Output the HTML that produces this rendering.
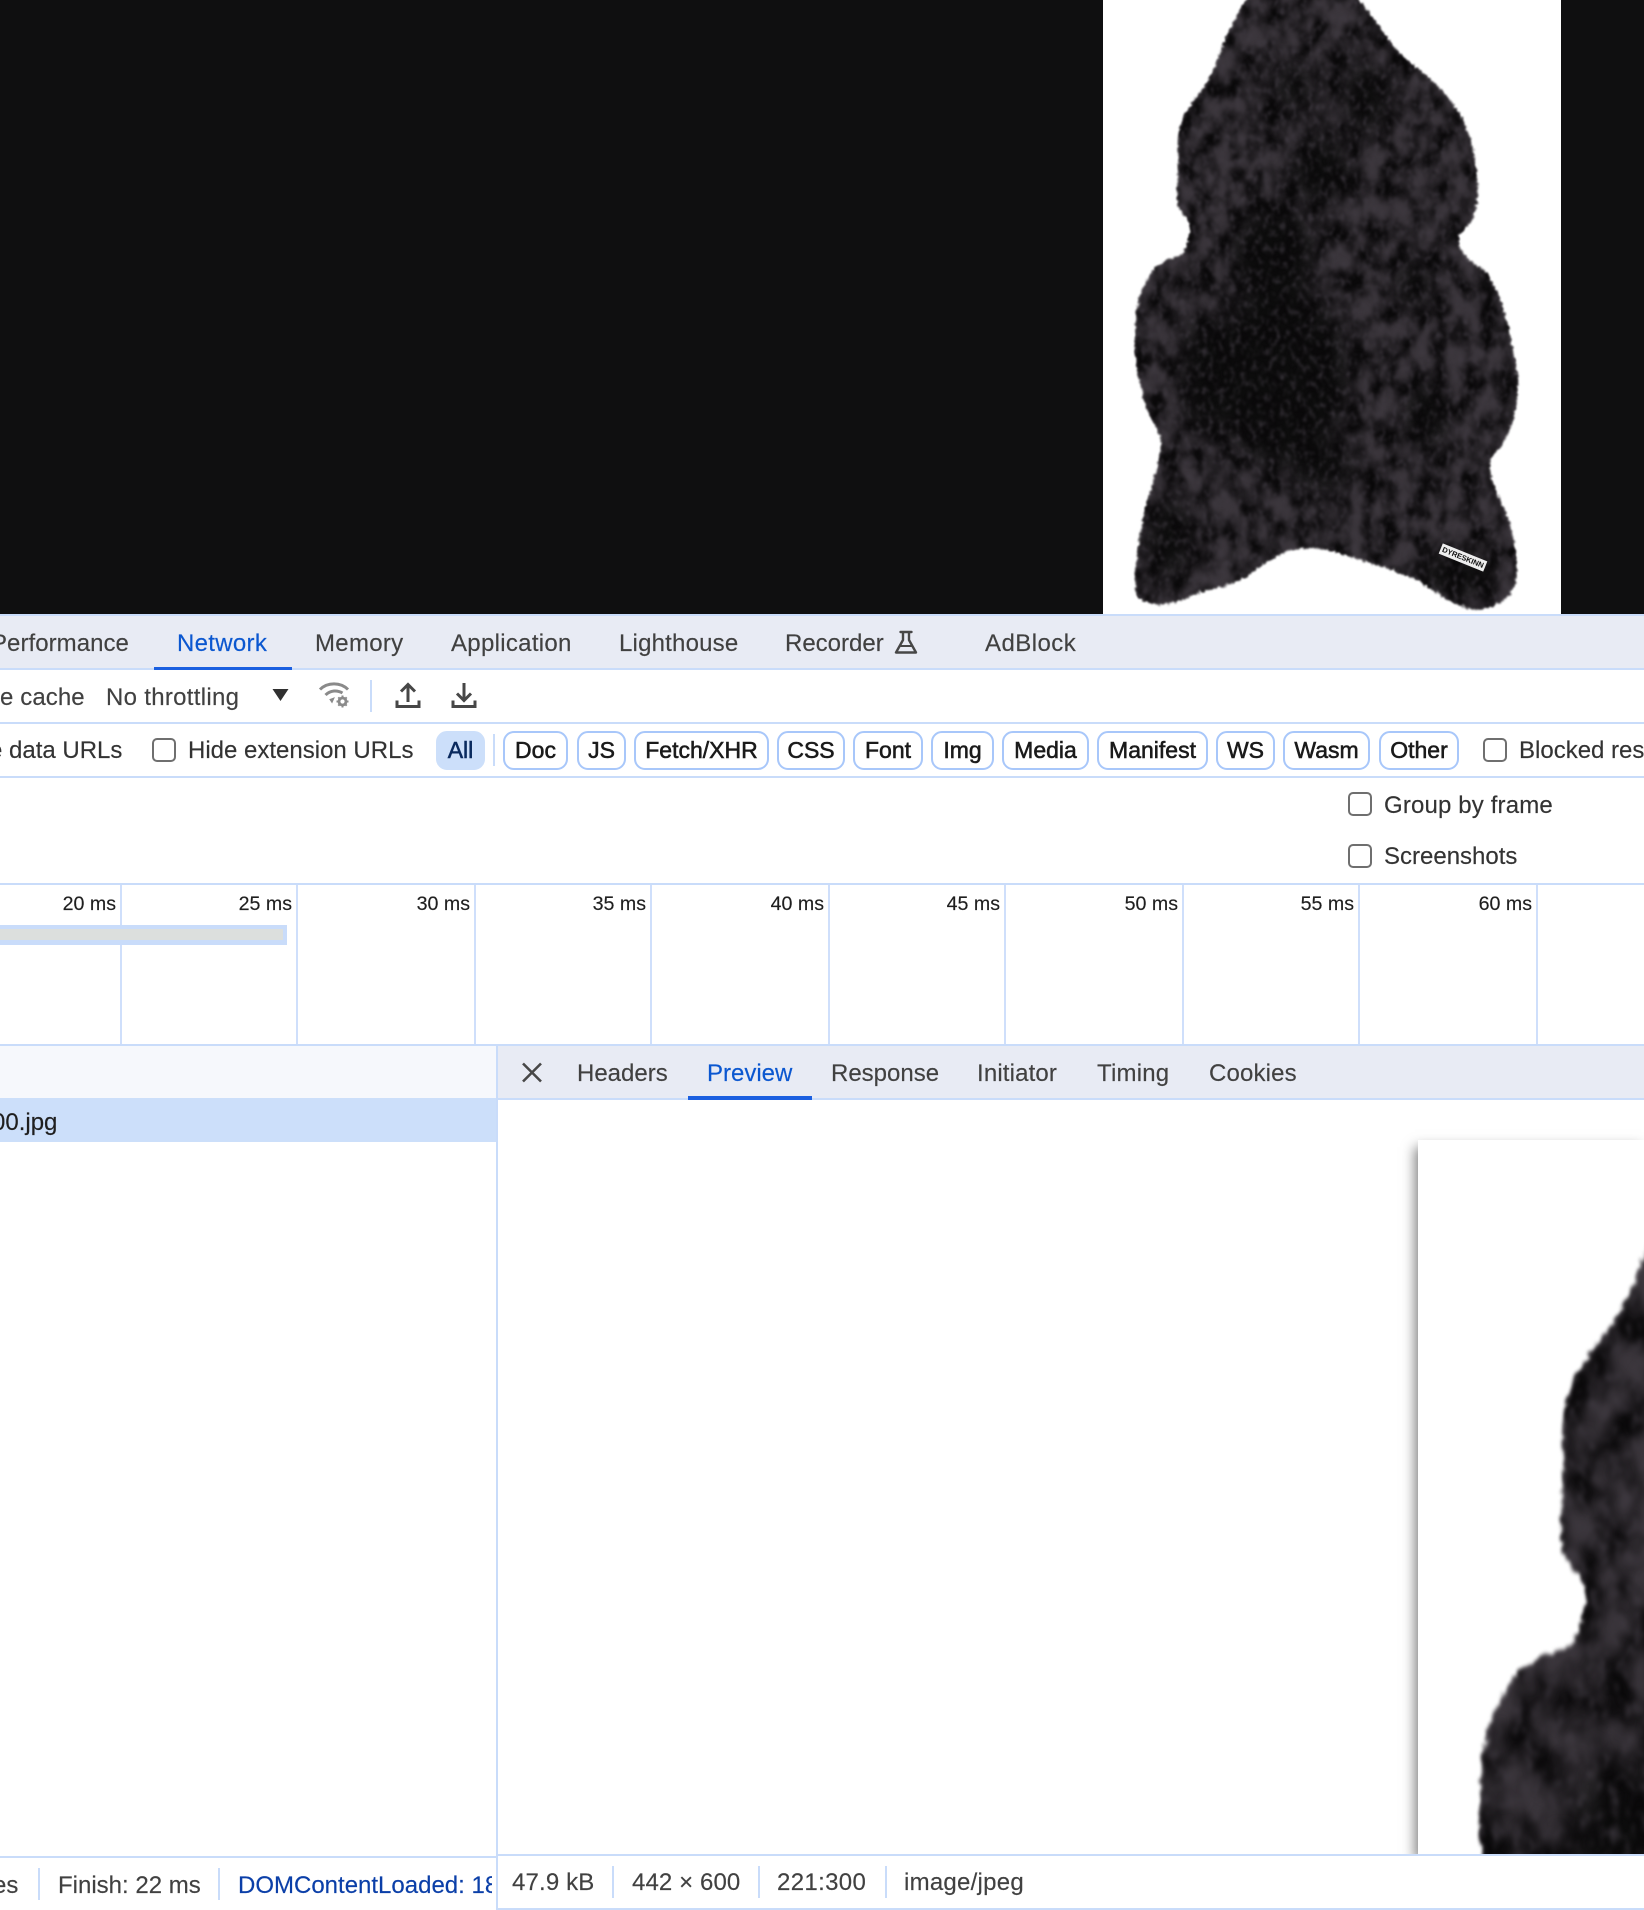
<!DOCTYPE html>
<html><head><meta charset="utf-8"><style>
html,body{margin:0;padding:0;width:1644px;height:1910px;overflow:hidden;background:#fff}
body{position:relative;font-family:"Liberation Sans",Arial,sans-serif;font-size:24px;color:#414141;-webkit-text-stroke:.15px currentColor}
.a{position:absolute}
.w{position:absolute;overflow:hidden;height:30px}
.t{position:absolute;white-space:nowrap;line-height:30px;height:30px}
.l{position:absolute;background:#c9dcfa}
.p{position:absolute;top:731px;height:39px;box-sizing:border-box;border:2px solid #a8c7fa;border-radius:11px;text-align:center;line-height:35px;font-size:23px;color:#1a1a1a;-webkit-text-stroke:.55px #1a1a1a;white-space:nowrap}
.c{position:absolute;width:24px;height:24px;box-sizing:border-box;border:2.5px solid #6f6f6f;border-radius:5px;background:#fff}
.m{position:absolute;top:889px;font-size:19.6px;line-height:30px;height:30px;color:#1f1f1f;text-align:right;width:100px;white-space:nowrap}
.v{position:absolute;top:885px;height:159px;width:2px;background:#cfdffb}
</style></head><body>
<div class="a" style="left:0;top:0;width:1644px;height:614px;background:#0f0f10"></div>
<div class="a" style="left:1103px;top:0;width:458px;height:614px;background:#fff"></div>

<svg class="a" style="left:1080px;top:0;overflow:hidden" width="504" height="614" viewBox="0 0 1512 1553" preserveAspectRatio="none">
<defs>
<path id="rp" d="M515 -20 L815 -20 C850 15 885 50 915 90 C945 125 975 150 1020 180 C1065 210 1105 245 1135 285 C1168 330 1188 390 1190 450 C1194 490 1192 530 1172 560 C1152 580 1132 590 1134 610 C1140 640 1170 665 1205 680 C1240 705 1270 770 1285 830 C1295 880 1315 930 1312 1000 C1305 1060 1285 1115 1235 1155 C1220 1180 1235 1225 1265 1275 C1295 1325 1312 1385 1308 1470 C1290 1520 1240 1540 1180 1540 C1130 1535 1090 1510 1040 1480 C980 1450 900 1430 820 1410 C760 1390 700 1380 640 1390 C580 1400 530 1445 470 1470 C420 1490 370 1490 320 1510 C280 1530 210 1540 170 1505 C160 1450 175 1390 190 1310 C205 1250 240 1180 245 1120 C240 1080 195 1050 185 980 C165 930 160 870 170 790 C180 730 215 670 270 655 C300 650 320 640 325 610 C330 585 340 570 320 550 C290 530 288 500 295 450 C295 400 290 350 305 310 C320 270 360 240 385 205 C410 165 425 120 450 75 C470 40 490 10 515 -20 Z"/>
<clipPath id="rc"><use href="#rp"/></clipPath>
<filter id="bl" x="-40%" y="-40%" width="180%" height="180%"><feGaussianBlur stdDeviation="30"/></filter>
<filter id="fur" filterUnits="userSpaceOnUse" x="0" y="-40" width="1512" height="1660" color-interpolation-filters="sRGB">
<feTurbulence type="fractalNoise" baseFrequency="0.11" numOctaves="3" seed="4" result="n"/>
<feDisplacementMap in="SourceGraphic" in2="n" scale="16" xChannelSelector="R" yChannelSelector="G" result="d0"/>
<feGaussianBlur in="d0" stdDeviation="3" result="d"/>
<feTurbulence type="fractalNoise" baseFrequency="0.02 0.016" numOctaves="4" seed="11" result="m"/>
<feColorMatrix in="m" type="matrix" values="0 0 0 0 0.04 0 0 0 0 0.035 0 0 0 0 0.04 2.6 0 0 0 -0.85" result="s0"/>
<feGaussianBlur in="s0" stdDeviation="5" result="s1"/>
<feComposite in="s1" in2="d" operator="in" result="s"/>
<feTurbulence type="fractalNoise" baseFrequency="0.06 0.05" numOctaves="3" seed="23" result="h"/>
<feColorMatrix in="h" type="matrix" values="0 0 0 0 0.25 0 0 0 0 0.23 0 0 0 0 0.26 0 2 0 0 -0.98" result="h0"/>
<feGaussianBlur in="h0" stdDeviation="3" result="h1"/>
<feComposite in="h1" in2="d" operator="in" result="hh"/>
<feMerge><feMergeNode in="d"/><feMergeNode in="s"/><feMergeNode in="hh"/></feMerge>
</filter>
<g id="rug"><g filter="url(#fur)"><use href="#rp" fill="#3b363c"/><g clip-path="url(#rc)"><g filter="url(#bl)" fill="#0a080a">
<ellipse cx="600" cy="950" rx="210" ry="230"/>
<ellipse cx="370" cy="950" rx="70" ry="160"/>
<ellipse cx="580" cy="640" rx="130" ry="120"/>
<ellipse cx="720" cy="430" rx="90" ry="90"/>
<ellipse cx="860" cy="250" rx="70" ry="90"/>
<ellipse cx="640" cy="220" rx="60" ry="60"/>
<ellipse cx="270" cy="1360" rx="70" ry="100"/>
<ellipse cx="1040" cy="1050" rx="70" ry="90"/>
<ellipse cx="1000" cy="720" rx="60" ry="60"/>
<ellipse cx="1130" cy="1450" rx="120" ry="60"/>
<ellipse cx="730" cy="1180" rx="100" ry="60"/>
</g></g></g></g>
</defs>
<use href="#rug"/>
</svg>
<div class="a" style="left:1439px;top:552px;width:48px;height:11px;background:#eee;transform:rotate(22deg);font:bold 7.5px/11px 'Liberation Sans',sans-serif;color:#111;-webkit-text-stroke:0;text-align:center;white-space:nowrap;overflow:hidden">DYRESKINN</div>

<!-- main tabs -->
<div class="a" style="left:0;top:616px;width:1644px;height:52px;background:#e8ebf4"></div>
<div class="l" style="left:0;top:614px;width:1644px;height:2px"></div>
<div class="l" style="left:0;top:668px;width:1644px;height:2px"></div>
<div class="a" style="left:154px;top:667px;width:138px;height:3px;background:#1b5fe0"></div>
<div class="w" style="left:0;top:629px;width:140px"><div class="t" style="left:-9px;top:0;letter-spacing:.05px">Performance</div></div>
<div class="t" style="left:177px;top:629px;color:#0b57d0;letter-spacing:.3px">Network</div>
<div class="t" style="left:315px;top:629px;letter-spacing:.3px">Memory</div>
<div class="t" style="left:451px;top:629px;letter-spacing:.3px">Application</div>
<div class="t" style="left:619px;top:629px;letter-spacing:.2px">Lighthouse</div>
<div class="t" style="left:785px;top:629px">Recorder</div>
<svg class="a" style="left:893px;top:630px" width="26" height="25" viewBox="0 0 26 25" fill="none" stroke="#474747" stroke-width="2.4" stroke-linejoin="round" stroke-linecap="round"><path d="M7.5 2H18.5M10 2V10L3 22.5H23L16 10V2"/><path d="M7 16H19" stroke-width="2"/></svg>
<div class="t" style="left:985px;top:629px;letter-spacing:.45px">AdBlock</div>

<!-- toolbar -->
<div class="w" style="left:0;top:683px;width:100px"><div class="t" style="left:0;top:0;letter-spacing:.1px">e cache</div></div>
<div class="t" style="left:106px;top:683px;letter-spacing:.3px">No throttling</div>
<svg class="a" style="left:272px;top:688px" width="17" height="14"><path d="M0.5 1H16.5L8.5 13Z" fill="#303030"/></svg>
<svg class="a" style="left:318px;top:681px" width="34" height="28" viewBox="0 0 34 28" fill="none" stroke="#8a8a8a" stroke-width="3"><path d="M2 8.5C9.5 1 22.5 1 30 8.5"/><path d="M7.5 14C12.5 9 19.500 9 24.500 12"/><path d="M14 21.500L12 18.500L16 17Z" fill="#8a8a8a" stroke-width="1"/><circle cx="24.500" cy="20.500" r="3.500" stroke-width="2.800"/><path d="M24.500 14.500V16M24.500 25V26.500M18.500 20.500H20M29 20.500H30.500M20.300 16.300L21.300 17.300M27.700 23.700L28.700 24.700M20.300 24.700L21.300 23.700M27.700 17.300L28.700 16.300" stroke-width="2"/></svg>
<div class="l" style="left:370px;top:680px;width:2px;height:32px"></div>
<svg class="a" style="left:395px;top:682px" width="26" height="27" viewBox="0 0 26 27" fill="none" stroke="#474747" stroke-width="3"><path d="M13 20V3M6 9.500L13 2.500L20 9.500"/><path d="M2 18.500V24.500H24V18.500"/></svg>
<svg class="a" style="left:451px;top:682px" width="26" height="27" viewBox="0 0 26 27" fill="none" stroke="#474747" stroke-width="3"><path d="M13 1V18M6 11.500L13 18.500L20 11.500"/><path d="M2 18.500V24.500H24V18.500"/></svg>
<div class="l" style="left:0;top:722px;width:1644px;height:2px"></div>

<!-- filter row -->
<div class="w" style="left:0;top:736px;width:130px"><div class="t" style="left:-11px;top:0;color:#333">e data URLs</div></div>
<div class="c" style="left:152px;top:738px"></div>
<div class="t" style="left:188px;top:736px;color:#333">Hide extension URLs</div>
<div class="p" style="left:436px;width:49px;background:#ccdffa;border-color:#ccdffa;color:#0a2a5e;-webkit-text-stroke-color:#0a2a5e">All</div>
<div class="l" style="left:493px;top:734px;width:2px;height:32px"></div>
<div class="p" style="left:503px;width:65px">Doc</div>
<div class="p" style="left:577px;width:49px">JS</div>
<div class="p" style="left:634px;width:135px">Fetch/XHR</div>
<div class="p" style="left:777px;width:68px">CSS</div>
<div class="p" style="left:853px;width:70px">Font</div>
<div class="p" style="left:931px;width:63px">Img</div>
<div class="p" style="left:1002px;width:87px">Media</div>
<div class="p" style="left:1097px;width:111px">Manifest</div>
<div class="p" style="left:1216px;width:59px">WS</div>
<div class="p" style="left:1283px;width:87px">Wasm</div>
<div class="p" style="left:1379px;width:80px">Other</div>
<div class="c" style="left:1483px;top:738px"></div>
<div class="w" style="left:1519px;top:736px;width:125px"><div class="t" style="left:0;top:0;color:#333">Blocked response cookies</div></div>
<div class="l" style="left:0;top:776px;width:1644px;height:2px"></div>

<div class="c" style="left:1348px;top:792px"></div>
<div class="t" style="left:1384px;top:791px;color:#333;letter-spacing:.15px">Group by frame</div>
<div class="c" style="left:1348px;top:844px"></div>
<div class="t" style="left:1384px;top:842px;color:#333">Screenshots</div>
<div class="l" style="left:0;top:883px;width:1644px;height:2px"></div>

<!-- timeline -->
<div class="v" style="left:120px"></div>
<div class="v" style="left:296px"></div>
<div class="v" style="left:474px"></div>
<div class="v" style="left:650px"></div>
<div class="v" style="left:828px"></div>
<div class="v" style="left:1004px"></div>
<div class="v" style="left:1182px"></div>
<div class="v" style="left:1358px"></div>
<div class="v" style="left:1536px"></div>
<div class="m" style="left:16px">20 ms</div>
<div class="m" style="left:192px">25 ms</div>
<div class="m" style="left:370px">30 ms</div>
<div class="m" style="left:546px">35 ms</div>
<div class="m" style="left:724px">40 ms</div>
<div class="m" style="left:900px">45 ms</div>
<div class="m" style="left:1078px">50 ms</div>
<div class="m" style="left:1254px">55 ms</div>
<div class="m" style="left:1432px">60 ms</div>
<div class="a" style="left:0;top:925px;width:287px;height:20px;background:#c9dcfa"></div>
<div class="a" style="left:0;top:929px;width:283px;height:11px;background:#dcdfdd"></div>
<div class="l" style="left:0;top:1044px;width:1644px;height:2px"></div>

<!-- left panel -->
<div class="a" style="left:0;top:1046px;width:496px;height:52px;background:#f6f8fc"></div>
<div class="a" style="left:0;top:1098px;width:496px;height:44px;background:#ccdffa"></div>
<div class="w" style="left:0;top:1108px;width:200px"><div class="t" style="left:-8px;top:0;color:#1f1f1f">00.jpg</div></div>
<div class="l" style="left:0;top:1856px;width:497px;height:2px"></div>
<div class="w" style="left:0;top:1871px;width:30px"><div class="t" style="left:-7px;top:0">es</div></div>
<div class="l" style="left:38px;top:1868px;width:2px;height:32px"></div>
<div class="t" style="left:58px;top:1871px">Finish: 22 ms</div>
<div class="l" style="left:218px;top:1868px;width:2px;height:32px"></div>
<div class="w" style="left:238px;top:1871px;width:254px"><div class="t" style="left:0;top:0;color:#0b3fa8">DOMContentLoaded: 18 ms</div></div>

<!-- right panel -->
<div class="a" style="left:498px;top:1046px;width:1146px;height:52px;background:#e8ebf4"></div>
<div class="l" style="left:496px;top:1046px;width:2px;height:864px"></div>
<div class="l" style="left:498px;top:1098px;width:1146px;height:2px"></div>
<div class="a" style="left:688px;top:1096px;width:124px;height:4px;background:#1b5fe0"></div>
<svg class="a" style="left:520px;top:1061px" width="24" height="23" fill="none" stroke="#474747" stroke-width="2.6"><path d="M3 2.500L21 20.500M21 2.500L3 20.500"/></svg>
<div class="t" style="left:577px;top:1059px">Headers</div>
<div class="t" style="left:707px;top:1059px;color:#0b57d0">Preview</div>
<div class="t" style="left:831px;top:1059px">Response</div>
<div class="t" style="left:977px;top:1059px;letter-spacing:.15px">Initiator</div>
<div class="t" style="left:1097px;top:1059px;letter-spacing:.2px">Timing</div>
<div class="t" style="left:1209px;top:1059px;letter-spacing:.15px">Cookies</div>

<div class="a" style="left:498px;top:1100px;width:1146px;height:754px;overflow:hidden">
<div class="a" style="left:920px;top:40px;width:226px;height:714px;background:#fff;box-shadow:-3px 7px 12px rgba(0,0,0,.5)"></div>
<svg class="a" style="left:920px;top:40px" width="226" height="714" viewBox="0 0 226 714"><g transform="translate(-44.4 15) scale(.6433 .763)"><use href="#rug"/></g></svg>
</div>

<div class="l" style="left:498px;top:1854px;width:1146px;height:2px"></div>
<div class="l" style="left:498px;top:1908px;width:1146px;height:2px"></div>
<div class="t" style="left:512px;top:1868px;letter-spacing:.15px">47.9 kB</div>
<div class="l" style="left:612px;top:1866px;width:2px;height:32px"></div>
<div class="t" style="left:632px;top:1868px;letter-spacing:.1px">442 × 600</div>
<div class="l" style="left:758px;top:1866px;width:2px;height:32px"></div>
<div class="t" style="left:777px;top:1868px;letter-spacing:.35px">221:300</div>
<div class="l" style="left:885px;top:1866px;width:2px;height:32px"></div>
<div class="t" style="left:904px;top:1868px;letter-spacing:.25px">image/jpeg</div>
</body></html>
